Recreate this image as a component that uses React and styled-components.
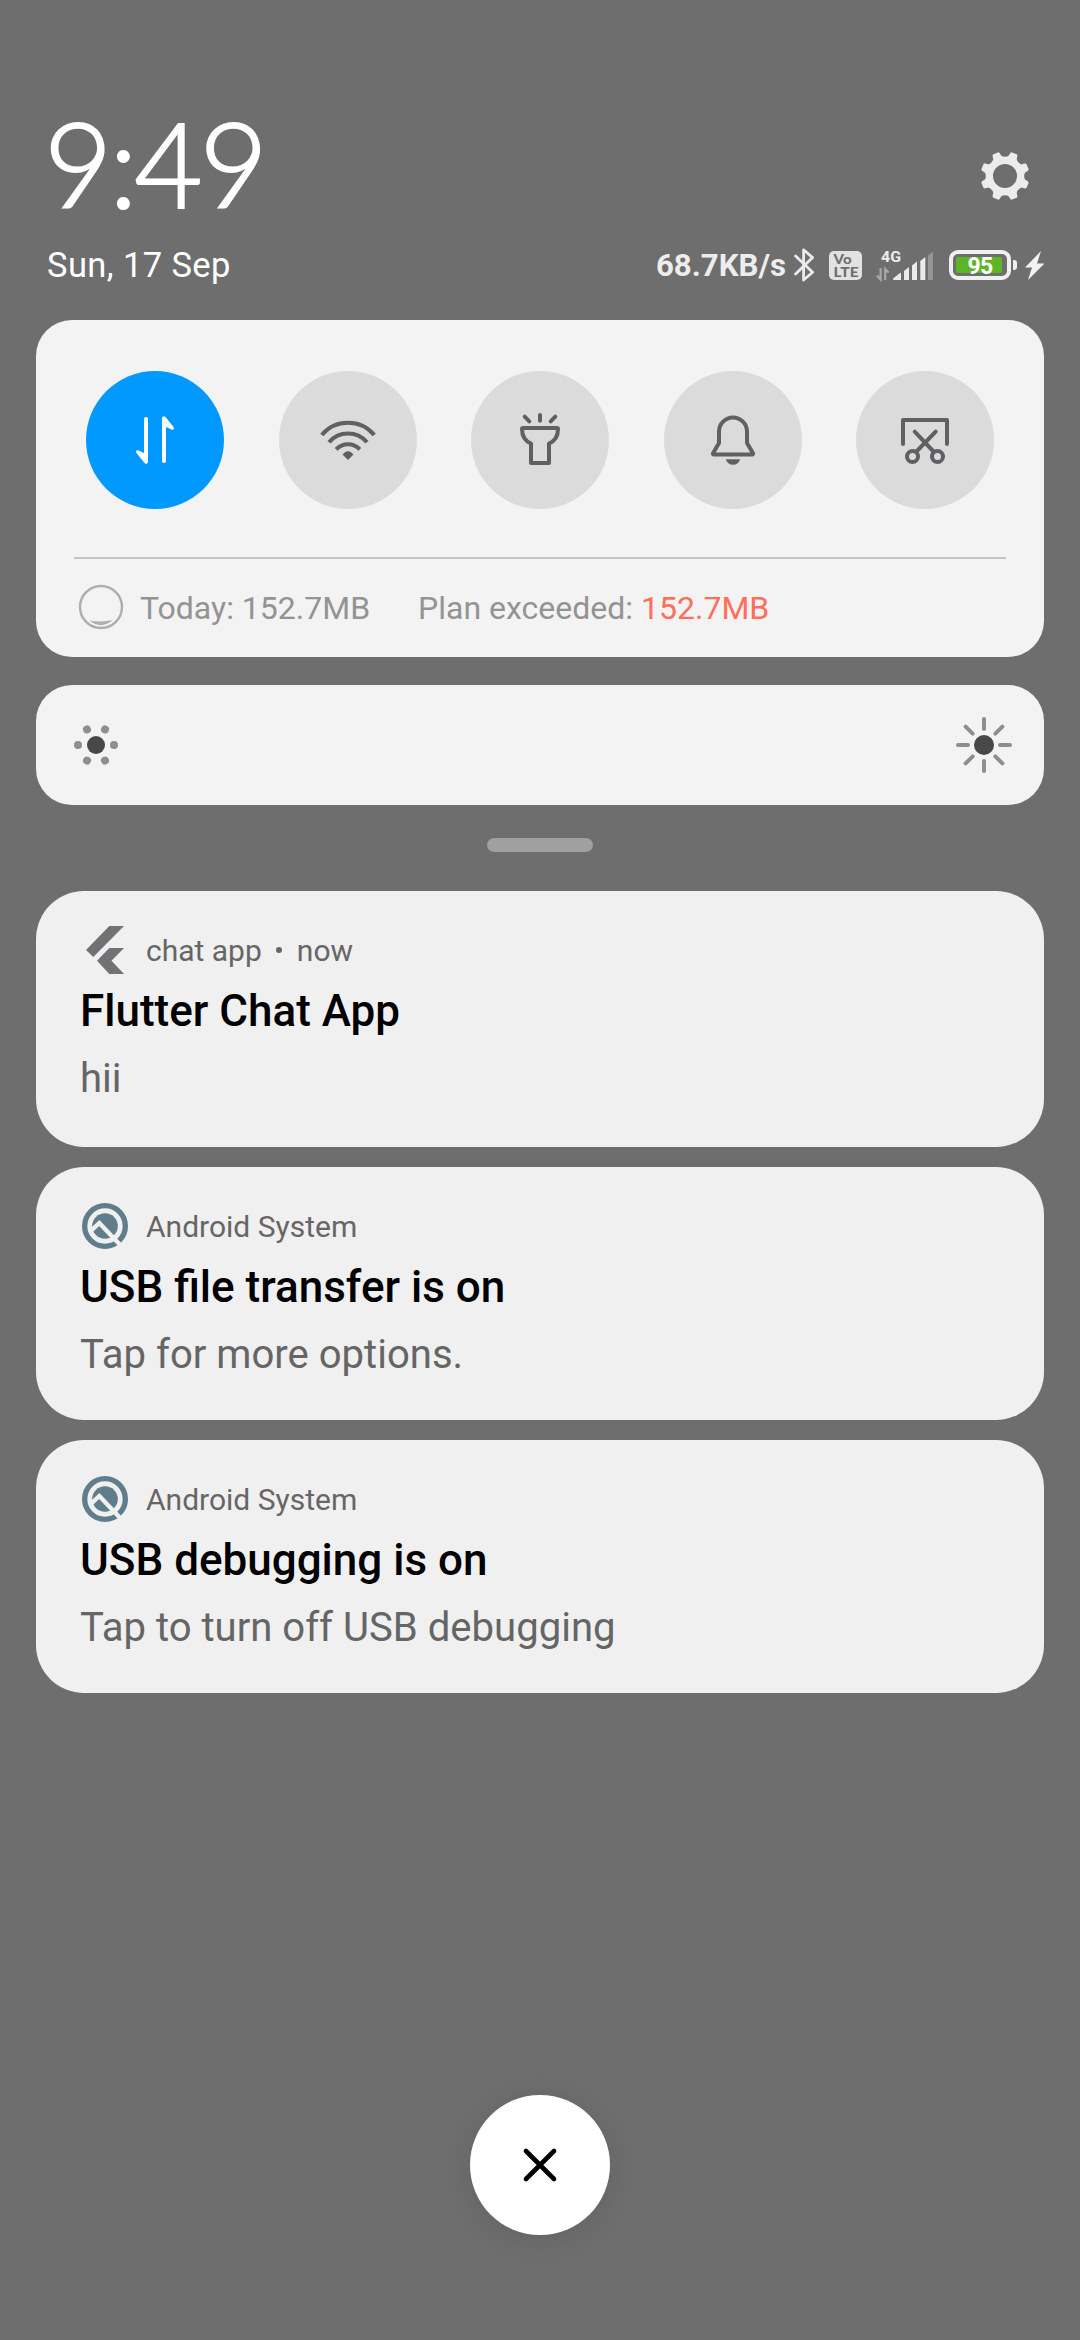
import React from "react";
import styled, { createGlobalStyle } from "styled-components";

const GlobalStyle = createGlobalStyle`
  * { box-sizing: border-box; }
  html, body { margin: 0; padding: 0; background: #6e6e6e; }
  body { font-family: Roboto, "Noto Sans", sans-serif; }
  svg { display: block; flex: none; }
`;

const Screen = styled.main`
  width: 1080px;
  height: 2340px;
  padding: 113px 36px 105px;
  display: flex;
  flex-direction: column;
  background: #6e6e6e;
  overflow: hidden;
`;

const ClockRow = styled.header`
  height: 103px;
  padding: 0 14px 0 8px;
  display: flex;
  justify-content: space-between;
  align-items: flex-start;
`;

const Clock = styled.time`
  display: block;
  font: 300 118px/100px Lato, Roboto, sans-serif;
  letter-spacing: -3.2px;
  -webkit-text-stroke: 2px #fff;
  color: #fff;
  white-space: nowrap;
`;

const SettingsButton = styled.button`
  margin: 38px 0 0;
  padding: 0;
  border: 0;
  background: none;
  color: #ececec;
`;

const StatusRow = styled.div`
  height: 50px;
  margin: 24px 0 30px;
  padding-left: 11px;
  display: flex;
  justify-content: space-between;
  align-items: center;
`;

const DateText = styled.span`
  font-size: 34.5px;
  line-height: 50px;
  letter-spacing: 0.4px;
  color: #fff;
`;

const StatusIcons = styled.div`
  display: flex;
  align-items: center;
  color: #ebebeb;
`;

const NetSpeed = styled.span`
  font-size: 31.2px;
  font-weight: 700;
  line-height: 50px;
  margin-right: 8px;
  padding-top: 1px;
  color: #ededed;
`;

const Spacer = styled.span`
  width: ${(p) => p.$w}px;
  flex: none;
`;

const Battery = styled.div`
  width: 62px;
  height: 30px;
  border: 4px solid #f0f0f0;
  border-radius: 9px;
  padding: 3px;
  display: flex;
`;

const BatteryLevel = styled.div`
  width: 46px;
  height: 16px;
  border-radius: 2px;
  background: #5bb524;
  color: #fff;
  font-size: 23px;
  font-weight: 700;
  line-height: 19px;
  letter-spacing: -0.8px;
  text-align: center;
  padding-left: 2px;
`;

const BatteryTip = styled.span`
  width: 4px;
  height: 10px;
  margin-left: 2px;
  border-radius: 0 3px 3px 0;
  background: #f0f0f0;
`;

const Panel = styled.section`
  flex: none;
  border-radius: 36px;
  background: #f3f3f3;
`;

const QuickPanel = styled(Panel)`
  height: 337px;
  padding: 51px 38px 0;
`;

const TileRow = styled.div`
  display: flex;
  justify-content: space-between;
  padding: 0 12px;
`;

const Tile = styled.button`
  width: 138px;
  height: 138px;
  padding: 0;
  border: 0;
  border-radius: 50%;
  background: ${(p) => (p.$on ? "#0099ff" : "#dbdbdb")};
  color: ${(p) => (p.$on ? "#ffffff" : "#5f6061")};
`;

const UsageRow = styled.div`
  margin-top: 48px;
  border-top: 2px solid #c3c3c3;
  padding-left: 4px;
  height: 98px;
  display: flex;
  align-items: center;
  font-size: 32px;
  line-height: 48px;
  color: #939393;
  white-space: pre;
`;

const UsageText = styled.span`
  margin-left: ${(p) => p.$gap}px;
  padding-top: 1px;
`;

const Exceeded = styled.span`
  color: #ff6f5c;
`;

const BrightnessPanel = styled(Panel)`
  height: 120px;
  margin-top: 28px;
  padding: 0 30px 0 36px;
  display: flex;
  align-items: center;
  justify-content: space-between;
`;

const Handle = styled.div`
  width: 106px;
  height: 14px;
  margin: 33px auto 39px;
  flex: none;
  border-radius: 7px;
  background: #a0a0a0;
`;

const NotificationList = styled.div`
  display: flex;
  flex-direction: column;
  gap: 20px;
`;

const Notification = styled.article`
  height: ${(p) => p.$h}px;
  border-radius: 48px;
  background: #f0f0f0;
  padding: 35px 44px 0;
`;

const AppLine = styled.div`
  height: 48px;
  padding-left: 1px;
  display: flex;
  align-items: center;
  font-size: 30px;
  line-height: 48px;
  color: #666;
`;

const AppName = styled.span`
  margin-left: 17px;
  padding-top: 1px;
`;

const When = styled.span`
  padding-top: 1px;
`;

const Dot = styled.span`
  width: 6px;
  height: 6px;
  border-radius: 50%;
  margin: 0 14.5px;
  background: #666;
`;

const Title = styled.h2`
  margin: 8px 0 0;
  font-size: 44px;
  font-weight: 500;
  line-height: 58px;
  color: #000;
`;

const Body = styled.p`
  margin: 12px 0 0;
  font-size: 40.1px;
  line-height: 54px;
  color: #656565;
`;

const ClearButton = styled.button`
  width: 140px;
  height: 140px;
  margin: auto auto 0;
  padding: 0;
  border: 0;
  border-radius: 50%;
  display: flex;
  align-items: center;
  justify-content: center;
  background: #fff;
  box-shadow: 0 4px 30px rgba(0, 0, 0, 0.1);
`;

// One notch of the gear outline, repeated every 45 degrees round the centre.
const notch = [[-6.6, -23.7], [-3.6, -22.6], [-5.4, -19.2], [0, -19.2], [5.4, -19.2], [3.6, -22.6], [6.6, -23.7]];
const gearPath =
  Array.from({ length: 8 }, (_, i) => {
    const a = (i * Math.PI) / 4;
    const p = notch.map(([x, y]) =>
      `${(x * Math.cos(a) - y * Math.sin(a)).toFixed(2)} ${(x * Math.sin(a) + y * Math.cos(a)).toFixed(2)}`
    );
    return `${i ? "L" : "M"}${p[0]}C${p[1]} ${p[2]} ${p[3]}C${p[4]} ${p[5]} ${p[6]}`;
  }).join("") + "ZM-12 0A12 12 0 1 0 12 0A12 12 0 1 0-12 0Z";

const GearIcon = () => (
  <svg width="50" height="50" viewBox="-25 -25 50 50">
    <path d={gearPath} fill="currentColor" fillRule="evenodd" />
  </svg>
);

const BluetoothIcon = () => (
  <svg width="21" height="36" viewBox="0 0 21 36" fill="none" stroke="currentColor" strokeWidth="2.8" strokeLinejoin="round" strokeLinecap="round">
    <path d="M1.6 9L18.6 25.2L9.6 33V2.8L18.6 10.6L1.6 27" />
  </svg>
);

const VolteIcon = () => (
  <svg width="33" height="29" viewBox="0 0 33 29">
    <rect width="33" height="29" rx="5" fill="#e2e2e2" />
    <g fill="#6e6e6e" fontFamily="Lato, sans-serif" fontWeight="900">
      <text x="4.6" y="12.8" fontSize="13" textLength="18" lengthAdjust="spacingAndGlyphs">Vo</text>
      <text x="4.6" y="25.6" fontSize="14" textLength="25" lengthAdjust="spacingAndGlyphs">LTE</text>
    </g>
  </svg>
);

const SignalIcon = () => (
  <svg width="57" height="34" viewBox="0 0 57 34">
    <text x="5" y="13.6" fontSize="15.5" fontWeight="700" fontFamily="Roboto, sans-serif" fill="#ebebeb" textLength="20" lengthAdjust="spacingAndGlyphs">4G</text>
    <path d="M4.6 20V31.6L0.8 27.6M9.2 32V21L12.6 24.6" fill="none" stroke="#a8a8a8" strokeWidth="2.2" />
    <path d="M17 31.6Q17 30.6 18 29.8L24 25Q25 24.4 25 26V32H17.4ZM28 23L33 19V32H28ZM36 17.5L41 13.5V32H36ZM44.3 13L49.3 9V32H44.3Z" fill="#ebebeb" />
    <path d="M52 7.5L57 3.5V32H52Z" fill="#959595" />
  </svg>
);

const BoltIcon = () => (
  <svg width="19" height="29" viewBox="0 0 19 29">
    <path d="M16 0L0 16.6H7L3 29L19.5 12.4H12Z" fill="#f2f2f2" />
  </svg>
);

const TileSvg = ({ children }) => (
  <svg width="138" height="138" viewBox="0 0 138 138" fill="none" stroke="currentColor" strokeWidth="4" strokeLinecap="round" strokeLinejoin="round">
    {children}
  </svg>
);

const tiles = [
  {
    name: "Mobile data",
    on: true,
    art: (
      <g fill="currentColor" stroke="none">
        <path d="M58 48a2 2 0 0 1 4 0V90.500a2 2 0 0 1-3.500 1.500L50.500 82C49.200 80.200 50.800 78.700 52.500 79.400L58 82Z" />
        <path d="M80 90a2 2 0 0 1-4 0V47.500a2 2 0 0 1 3.500-1.500L87.500 56C88.800 57.800 87.200 59.300 85.500 58.600L80 56Z" />
      </g>
    ),
  },
  {
    name: "Wi-Fi",
    art: (
      <>
        <g strokeLinecap="butt">
          <path d="M42.800 64A34.200 34.200 0 0 1 95.200 64" />
          <path d="M50 71.300A25 25 0 0 1 88 71.300" />
          <path d="M57.200 78.400A16 16 0 0 1 80.800 78.400" />
        </g>
        <path d="M69 89L63.500 83.500Q69 76.500 74.500 83.500Z" fill="currentColor" stroke="none" />
      </>
    ),
  },
  {
    name: "Flashlight",
    art: (
      <>
        <path d="M52 57H86Q87 57 87 58C87 65 84 70 78 72.500V92H60V72.500C54 70 51 65 51 58Q51 57 52 57Z" />
        <path d="M69 44V49.700M53.700 45.700L58.300 50.300M84.300 45.700L79.700 50.300" />
      </>
    ),
  },
  {
    name: "Ringer",
    art: (
      <>
        <path d="M55 60.500a14 14 0 0 1 28 0V72L89 82.300Q89.300 83.300 88.500 83.500H49.500Q48.700 83.300 49 82.300L55 72Z" />
        <path d="M61.700 88.200H76.300Q74 93.800 69 93.800T61.700 88.200Z" fill="currentColor" stroke="none" />
      </>
    ),
  },
  {
    name: "Screenshot",
    art: (
      <>
        <path d="M47 73V49H91V73" />
        <path d="M58.700 60.700L77.500 80.500M79.700 60.700L60.500 80.500" />
        <circle cx="56.500" cy="85.500" r="5.500" />
        <circle cx="81.500" cy="85.500" r="5.500" />
      </>
    ),
  },
];

const UsageIcon = () => (
  <svg width="46" height="46" viewBox="-23 -23 46 46">
    <circle r="21" fill="none" stroke="#adadad" strokeWidth="2.4" />
    <path d="M-11.500 13.500Q0 15.500 12 13Q0 23-11.500 13.500Z" fill="#b0b0b0" />
  </svg>
);

const DimIcon = () => (
  <svg width="48" height="48" viewBox="-24 -24 48 48">
    <circle r="9" fill="#484848" />
    {[0, 60, 120, 180, 240, 300].map((a) => (
      <circle key={a} cx="18" r="4" fill="#8e8e8e" transform={`rotate(${a})`} />
    ))}
  </svg>
);

const BrightIcon = () => (
  <svg width="60" height="60" viewBox="-30 -30 60 60">
    <circle r="10" fill="#484848" />
    {[0, 45, 90, 135, 180, 225, 270, 315].map((a) => (
      <path key={a} d="M16 0H26" stroke="#8e8e8e" strokeWidth="4" strokeLinecap="round" transform={`rotate(${a})`} />
    ))}
  </svg>
);

const FlutterIcon = () => (
  <svg width="48" height="48" viewBox="0 0 48 48">
    <path d="M28.300 0H43L12.300 31L5 24ZM28.300 22H43L30.500 34.700L43 48H28.300L16 34.700Z" fill="#717274" />
  </svg>
);

const SystemIcon = () => (
  <svg width="48" height="48" viewBox="18 20 144 144">
    <circle cx="90" cy="92" r="61" fill="none" stroke="#607d8b" strokeWidth="16" />
    <circle cx="90" cy="92" r="38.500" fill="#607d8b" />
    <path d="M46 108L73 83L142 156" fill="none" stroke="#f0f0f0" strokeWidth="13" />
  </svg>
);

const notifications = [
  { app: "chat app", when: "now", title: "Flutter Chat App", body: "hii", icon: <FlutterIcon />, h: 256 },
  { app: "Android System", title: "USB file transfer is on", body: "Tap for more options.", icon: <SystemIcon />, h: 253 },
  { app: "Android System", title: "USB debugging is on", body: "Tap to turn off USB debugging", icon: <SystemIcon />, h: 253 },
];

export default function App() {
  return (
    <>
      <GlobalStyle />
      <Screen>
        <ClockRow>
          <Clock>9:49</Clock>
          <SettingsButton aria-label="Settings"><GearIcon /></SettingsButton>
        </ClockRow>
        <StatusRow>
          <DateText>Sun, 17 Sep</DateText>
          <StatusIcons>
            <NetSpeed>68.7KB/s</NetSpeed>
            <BluetoothIcon />
            <Spacer $w={14} />
            <VolteIcon />
            <Spacer $w={14} />
            <SignalIcon />
            <Spacer $w={16} />
            <Battery><BatteryLevel>95</BatteryLevel></Battery>
            <BatteryTip />
            <Spacer $w={8} />
            <BoltIcon />
          </StatusIcons>
        </StatusRow>
        <QuickPanel>
          <TileRow>
            {tiles.map((t) => (
              <Tile key={t.name} $on={t.on} aria-label={t.name}>
                <TileSvg>{t.art}</TileSvg>
              </Tile>
            ))}
          </TileRow>
          <UsageRow>
            <UsageIcon />
            <UsageText $gap={16}>Today: 152.7MB</UsageText>
            <UsageText $gap={48}>Plan exceeded: <Exceeded>152.7MB</Exceeded></UsageText>
          </UsageRow>
        </QuickPanel>
        <BrightnessPanel>
          <DimIcon />
          <BrightIcon />
        </BrightnessPanel>
        <Handle />
        <NotificationList>
          {notifications.map((n) => (
            <Notification key={n.title} $h={n.h}>
              <AppLine>
                {n.icon}
                <AppName>{n.app}</AppName>
                {n.when && <><Dot /><When>{n.when}</When></>}
              </AppLine>
              <Title>{n.title}</Title>
              <Body>{n.body}</Body>
            </Notification>
          ))}
        </NotificationList>
        <ClearButton aria-label="Clear all">
          <svg width="36" height="36" viewBox="-18 -18 36 36" stroke="#000" strokeWidth="4.600" strokeLinecap="round">
            <path d="M-14 -14L14 14M14 -14L-14 14" />
          </svg>
        </ClearButton>
      </Screen>
    </>
  );
}
